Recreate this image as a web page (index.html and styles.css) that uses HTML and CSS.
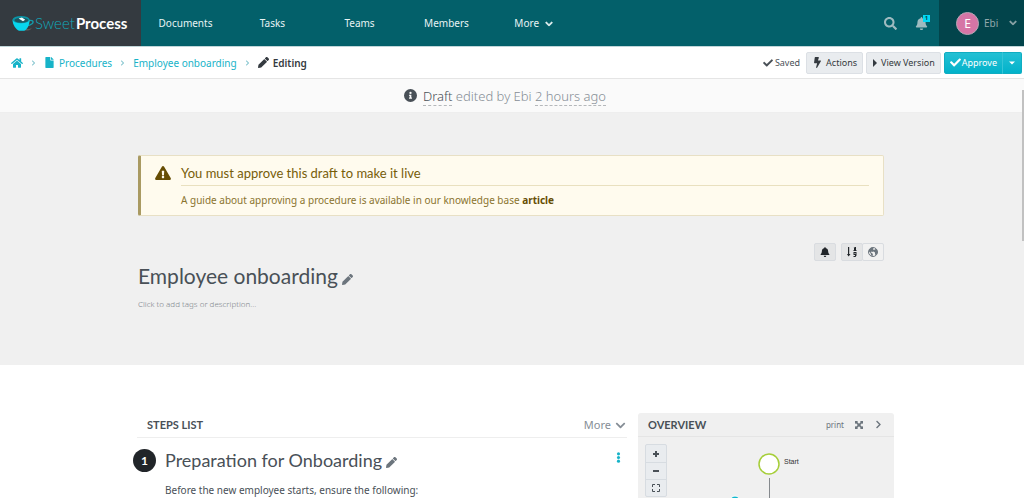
FILE: index.html
```html
<!DOCTYPE html>
<html lang="en">
<head>
<meta charset="utf-8">
<meta name="viewport" content="width=device-width, initial-scale=1">
<title>Employee onboarding - SweetProcess</title>
<link rel="stylesheet" href="styles.css">
</head>
<body>
<svg class="sprite" aria-hidden="true">
  <symbol id="i-pencil" viewBox="0 0 512 512"><path d="M498 142l-46 46c-5 5-13 5-17 0L324 77c-5-5-5-12 0-17l46-46c19-19 49-19 68 0l60 60c19 19 19 49 0 68zM284 100L22 362 0 484c-3 16 12 30 28 28l122-22 262-262c5-5 5-13 0-17L301 100c-4-5-12-5-17 0z"/></symbol>
  <symbol id="i-check" viewBox="0 0 512 512"><path d="M173.898 439.404l-166.4-166.4c-9.997-9.997-9.997-26.206 0-36.204l36.203-36.204c9.997-9.998 26.207-9.998 36.204 0L192 312.69 432.095 72.596c9.997-9.997 26.207-9.997 36.204 0l36.203 36.204c9.997 9.997 9.997 26.206 0 36.204l-294.4 294.401c-9.998 9.997-26.207 9.997-36.204-.001z"/></symbol>
  <symbol id="i-down" viewBox="0 0 448 512"><path d="M207 381.500L13 187c-9-9-9-24 0-34l22-22c10-10 25-10 34 0l155 154 155-154c9-10 24-10 34 0l22 22c9 10 9 25 0 34L241 381c-9 10-25 10-34 0z"/></symbol>
  <symbol id="i-right" viewBox="0 0 320 512"><path d="M285 273L91 467c-9 10-24 10-34 0l-22-22c-10-10-10-25 0-34l154-155L35 101c-10-9-10-24 0-34l22-22c10-10 25-10 34 0l194 194c10 9 10 25 0 34z"/></symbol>
  <symbol id="i-bell" viewBox="0 0 448 512"><path d="M224 512c35.320 0 63.970-28.650 63.970-64H160.030c0 35.350 28.650 64 63.970 64zm215.390-149.710c-19.320-20.760-55.470-51.990-55.470-154.290 0-77.700-54.480-139.900-127.940-155.160V32c0-17.670-14.320-32-31.980-32s-31.980 14.330-31.980 32v20.840C118.560 68.100 64.080 130.300 64.080 208c0 102.300-36.150 133.530-55.470 154.290-6 6.450-8.660 14.160-8.610 21.710.11 16.400 12.980 32 32.100 32h383.800c19.120 0 32-15.600 32.100-32 .05-7.550-2.610-15.270-8.610-21.710z"/></symbol>
</svg>

<header class="topbar">
  <a class="brand" href="#" aria-label="SweetProcess">
    <svg class="cup" viewBox="0 0 40 30" aria-hidden="true">
      <path d="M30 10c7-2 10 1 7 5-3 3-7 4-11 4" fill="none" stroke="#1599a8" stroke-width="2.500"/>
      <path d="M20 27c7 2 15 0 16-4-5 3-10 2-14 0z" fill="#5d5a58"/>
      <path d="M1 8c0 9 6 18 12 20h9c6-2 10-11 10-20z" fill="#08d5ed"/>
      <ellipse cx="16.500" cy="8" rx="15.500" ry="6.500" fill="#0a93a5"/>
      <ellipse cx="17" cy="9" rx="12.500" ry="4.500" fill="#1d5660"/>
      <path d="M12 6l6-2 6 4-4 3z" fill="#f2ffff"/>
    </svg>
    <span class="sweet">Sweet</span><span class="process">Process</span>
  </a>
  <nav class="mainnav" aria-label="Main">
    <a href="#">Documents</a><a href="#">Tasks</a><a href="#">Teams</a><a href="#">Members</a>
    <a href="#">More <svg class="icon s7 heavy"><use href="#i-down"/></svg></a>
  </nav>
  <div class="tools">
    <button class="plain" aria-label="Search"><svg class="icon s13" viewBox="0 0 512 512"><path d="M505 442.700L405.300 343c-4.500-4.500-10.600-7-17-7H372c27.600-35.300 44-79.700 44-128C416 93.100 322.900 0 208 0S0 93.100 0 208s93.100 208 208 208c48.300 0 92.700-16.400 128-44v16.300c0 6.400 2.500 12.500 7 17l99.700 99.700c9.400 9.400 24.600 9.400 33.900 0l28.300-28.300c9.400-9.400 9.400-24.600.1-34zM208 336c-70.700 0-128-57.200-128-128 0-70.700 57.200-128 128-128 70.700 0 128 57.200 128 128 0 70.700-57.200 128-128 128z"/></svg></button>
    <button class="plain alerts" aria-label="Notifications"><svg class="icon s13"><use href="#i-bell"/></svg><span class="badge">1</span></button>
  </div>
  <button class="plain user"><span class="avatar">E</span>Ebi<svg class="icon s7 heavy"><use href="#i-down"/></svg></button>
</header>

<div class="subbar">
  <nav class="crumbs" aria-label="Breadcrumb">
    <a href="#" aria-label="Home"><svg class="icon s12" viewBox="0 0 576 512"><path d="M280.370 148.260L96 300.110V464a16 16 0 0 0 16 16l112.060-.29a16 16 0 0 0 15.920-16V368a16 16 0 0 1 16-16h64a16 16 0 0 1 16 16v95.640a16 16 0 0 0 16 16.050L464 480a16 16 0 0 0 16-16V300L295.670 148.260a12.190 12.190 0 0 0-15.300 0zM571.600 251.470L488 182.560V44.050a12 12 0 0 0-12-12h-56a12 12 0 0 0-12 12v72.610L318.470 43a48 48 0 0 0-61 0L4.340 251.470a12 12 0 0 0-1.600 16.900l25.500 31A12 12 0 0 0 45.150 301l235.220-193.740a12.190 12.190 0 0 1 15.300 0L530.900 301a12 12 0 0 0 16.900-1.600l25.500-31a12 12 0 0 0-1.700-16.930z"/></svg></a>
    <svg class="icon sep"><use href="#i-right"/></svg>
    <a href="#"><svg class="icon s11" viewBox="0 0 384 512"><path d="M224 136V0H24C10.700 0 0 10.700 0 24v464c0 13.300 10.700 24 24 24h336c13.300 0 24-10.700 24-24V160H248c-13.200 0-24-10.800-24-24zm160-14.100v6.100H256V0h6.100c6.400 0 12.500 2.500 17 7l97.900 98c4.500 4.500 7 10.600 7 16.900z"/></svg>Procedures</a>
    <svg class="icon sep"><use href="#i-right"/></svg>
    <a href="#">Employee onboarding</a>
    <svg class="icon sep"><use href="#i-right"/></svg>
    <span class="current"><svg class="icon s11"><use href="#i-pencil"/></svg>Editing</span>
  </nav>
  <div class="actions">
    <span class="saved"><svg class="icon s9"><use href="#i-check"/></svg>Saved</span>
    <button class="btn"><svg class="icon s10" viewBox="0 0 320 512"><path d="M296 160H180.600l42.600-129.800C227.200 15 215.700 0 200 0H56C44 0 33.800 8.900 32.200 20.800l-32 240C-1.700 275.200 9.500 288 24 288h118.700L96.600 482.500c-3.600 15.200 8 29.500 23.300 29.500 8.400 0 16.400-4.400 20.800-12l176-304c9.300-15.900-2.200-36-20.700-36z"/></svg>Actions</button>
    <button class="btn view"><svg class="icon s6" viewBox="0 0 6 8"><path d="M1 0l4 4-4 4z"/></svg>View Version</button>
    <div class="split"><button class="approve"><svg class="icon s10"><use href="#i-check"/></svg>Approve</button><button class="approve toggle" aria-label="Approval options"><svg class="icon s6" viewBox="0 0 8 6"><path d="M0 1h8L4 5z"/></svg></button></div>
  </div>
</div>

<main class="scroller">
  <div class="draft">
    <svg class="icon s13" viewBox="0 0 496 496"><path fill-rule="evenodd" d="M248 0a248 248 0 1 0 0 496 248 248 0 0 0 0-496zm0 106a44 44 0 1 1 0 88 44 44 0 0 1 0-88zm56 258c0 7-5 12-12 12h-88c-7 0-12-5-12-12v-24c0-7 5-12 12-12h12v-64h-12c-7 0-12-5-12-12v-24c0-7 5-12 12-12h64c7 0 12 5 12 12v100h12c7 0 12 5 12 12z"/></svg>
    <span><a href="#" class="state">Draft</a> edited by Ebi <a href="#">2 hours ago</a></span>
  </div>

  <section class="hero">
    <div class="notice" role="alert">
      <svg class="icon s14" viewBox="0 0 576 512"><path d="M569.517 440.013C587.975 472.007 564.806 512 527.940 512H48.054c-36.937 0-59.999-40.055-41.577-71.987L246.423 23.985c18.467-32.009 64.720-31.951 83.154 0l239.940 416.028zM288 354c-25.405 0-46 20.595-46 46s20.595 46 46 46 46-20.595 46-46-20.595-46-46-46zm-43.673-165.346l7.418 136c.347 6.364 5.609 11.346 11.982 11.346h48.546c6.373 0 11.635-4.982 11.982-11.346l7.418-136c.375-6.874-5.098-12.654-11.982-12.654h-63.383c-6.884 0-12.356 5.780-11.981 12.654z"/></svg>
      <div class="notice-body">
        <h2>You must approve this draft to make it live</h2>
        <p>A guide about approving a procedure is available in our knowledge base <a href="#">article</a></p>
      </div>
    </div>
    <div class="toggles">
      <button class="mini on" aria-label="Notify"><svg class="icon s10"><use href="#i-bell"/></svg></button>
      <div class="pair">
        <button class="mini on" aria-label="Numbered steps"><svg class="icon s10" viewBox="0 0 10 10"><path d="M1 0h1.200v7h1.300L1.600 9.500 0 7h1zM6.500 1L8 0h1v3h.500v1h-3V3H7V1zM6.500 5h3v3.500L8.500 10h-2V9H8V8H6.500zm1 1v1h1V6z"/></svg></button>
        <button class="mini" aria-label="Public"><svg class="icon s10" viewBox="0 0 20 20"><circle cx="10" cy="10" r="9" fill="none" stroke="currentColor" stroke-width="2"/><path d="M2 5l5-4 4 1-1 3 3 1-3 4-3-1-1 2 3 2 1 3-2 3-2-3-1-4-3-3zM14 4l4 1 1 7-3 4-2-1v-4l-3-2z"/></svg></button>
      </div>
    </div>
    <h1 class="title">Employee onboarding<svg class="icon s11"><use href="#i-pencil"/></svg></h1>
    <p class="hint">Click to add tags or description...</p>
  </section>

  <div class="columns">
    <section class="steps">
      <header class="steps-head"><h2>STEPS LIST</h2><button class="plain">More <svg class="icon s10"><use href="#i-down"/></svg></button></header>
      <article class="step">
        <span class="num">1</span>
        <div class="step-body">
          <h3>Preparation for Onboarding<svg class="icon s11"><use href="#i-pencil"/></svg></h3>
          <p>Before the new employee starts, ensure the following:</p>
        </div>
        <button class="plain dots" aria-label="Step menu"><svg class="icon s11" viewBox="0 0 4 12"><circle cx="2" cy="2" r="1.700"/><circle cx="2" cy="6" r="1.700"/><circle cx="2" cy="10" r="1.700"/></svg></button>
      </article>
    </section>
    <aside class="overview">
      <header class="over-head"><h2>OVERVIEW</h2>
        <a href="#">print</a>
        <button class="plain" aria-label="Expand"><svg class="icon s7" viewBox="0 0 16 16"><path d="M0 0h6L4.500 2 8 5.500 11.500 2 10 0h6v6l-2-1.500L10.500 8l3.500 3.500 2-1.500v6h-6l1.500-2L8 10.500 4.500 14 6 16H0v-6l2 1.500L5.500 8 2 4.500 0 6z"/></svg></button>
        <button class="plain" aria-label="Collapse"><svg class="icon s8"><use href="#i-right"/></svg></button>
      </header>
      <div class="canvas">
        <div class="zoom">
          <button aria-label="Zoom in"><svg class="icon s7" viewBox="0 0 8 8"><path d="M3 1h2v2h2v2H5v2H3V5H1V3h2z"/></svg></button>
          <button aria-label="Zoom out"><svg class="icon s7" viewBox="0 0 8 8"><path d="M1 3h6v2H1z"/></svg></button>
          <button aria-label="Fit"><svg class="icon s7" viewBox="0 0 8 8"><path d="M.5 3V.5H3M5 .5h2.500V3M7.500 5v2.500H5M3 7.500H.5V5" fill="none" stroke="currentColor"/></svg></button>
        </div>
        <svg class="flow" viewBox="0 0 80 60" aria-hidden="true">
          <circle cx="39" cy="20" r="10" fill="#fff" stroke="#a6ce39" stroke-width="1.500"/>
          <path d="M39.500 34v26" stroke="#85898d" fill="none"/>
          <circle cx="5" cy="57" r="5" fill="#10b7cd" stroke="#fff"/>
        </svg>
        <span class="start">Start</span>
      </div>
    </aside>
  </div>
  <span class="thumb"></span>
</main>
</body>
</html>
```
FILE: styles.css
```css
* { box-sizing: border-box; }
html, body { height: 100%; }
body { margin: 0; display: flex; flex-direction: column; overflow: hidden; background: #fff; color: #495057; font: 10px/16px "Noto Sans", sans-serif; }
h1, h2, h3, p { margin: 0; font-weight: 400; }
a { color: inherit; text-decoration: none; }
button { font: inherit; color: inherit; cursor: pointer; }
.sprite { position: absolute; width: 0; height: 0; }
.icon { fill: currentColor; flex: none; width: 10px; height: 10px; }
.s6 { width: 6px; height: 8px; }
.s7 { width: 8px; height: 8px; }
.s8 { width: 9px; height: 9px; }
.s9 { width: 10px; height: 10px; }
.s10 { width: 11px; height: 11px; }
.s11 { width: 11px; height: 11px; }
.s12 { width: 12px; height: 12px; }
.s13 { width: 13px; height: 13px; }
.s14 { width: 16px; height: 14px; }
.heavy { stroke: currentColor; stroke-width: 40px; }
.plain { padding: 0; border: 0; background: none; display: flex; align-items: center; }

.topbar { flex: none; height: 46px; display: flex; align-items: stretch; background: #03606a; color: #e8f3f4; }
.brand { width: 141px; padding-left: 12px; display: flex; align-items: center; background: #343a40; font: 15px/20px Lato, sans-serif; }
.cup { width: 22px; height: 17px; margin-right: 1px; }
.sweet { margin-right: 1px; color: #10a9bb; font-weight: 300; }
.process { color: #fff; font-weight: 700; }
.mainnav { padding-left: 1px; display: flex; align-items: center; }
.mainnav a { width: 87px; text-align: center; white-space: nowrap; }
.mainnav .icon { margin-left: 3px; vertical-align: middle; }
.tools { margin-left: auto; display: flex; gap: 18px; padding-right: 11px; color: #9fbbc0; }
.alerts { position: relative; }
.badge { position: absolute; top: 15px; right: -2px; width: 7px; height: 7px; background: #00d8f5; color: #03464e; font-size: 6px; line-height: 7px; font-weight: 700; text-align: center; }
.user { width: 85px; padding: 0 7px 0 17px; background: #02444b; color: #91a8ab; }
.avatar { width: 23px; height: 23px; margin-right: 5px; border: 1px solid #b5a8b5; border-radius: 50%; background: #d675a6; color: #fff; font-size: 12px; line-height: 21px; text-align: center; }
.user .icon { margin-left: auto; }

.subbar { flex: none; height: 33px; padding: 0 2px 0 11px; border-top: 1px solid #c0d6d9; border-bottom: 1px solid #e5e5e5; display: flex; justify-content: space-between; align-items: center; background: #fff; box-shadow: 0 1px 2px #0001; position: relative; }
.crumbs { display: flex; align-items: center; gap: 8px; color: #17b3c8; }
.crumbs a, .current { display: flex; align-items: center; gap: 4px; }
.crumbs .sep { width: 5px; height: 6px; color: #80c3cd; }
.current { color: #343a40; font-weight: 600; }
.actions { display: flex; align-items: center; gap: 3px; font-size: 9px; }
.saved { display: flex; align-items: center; gap: 2px; margin-right: 3px; }
.btn, .approve { height: 22px; padding: 0 5px; display: flex; align-items: center; gap: 3px; border: 1px solid #dce0e5; border-radius: 2px; background: #e9ecef; color: #343a40; }
.split { display: flex; }
.approve { padding: 0 5px; gap: 1px; border-color: #10adc1; border-radius: 2px 0 0 2px; background: linear-gradient(#24c0d4, #02b2ca); color: #fff; }
.toggle { border-left-color: #35c5d7; margin-left: -1px; padding: 0 6px; border-radius: 0 2px 2px 0; }

.scroller { flex: 1; min-height: 0; overflow: hidden; position: relative; }
.thumb { position: absolute; top: 11px; right: 0; width: 2px; height: 151px; background: #c1c1c1; }
.draft { height: 34px; border-bottom: 1px solid #eee; display: flex; align-items: center; justify-content: center; gap: 6px; background: #fafafa; color: #868e96; font-size: 13px; line-height: 16px; font-weight: 300; padding-right: 14px; }
.draft .icon, .draft .state { color: #495057; }
.draft a { border-bottom: 1px dashed #b5b8bb; }
.hero { min-height: 252px; padding: 42px 140px 0 138px; background: #f0f0f0; }
.notice { display: flex; gap: 10px; padding: 9px 14px 7px 14px; border: 1px solid #e8e0c5; border-left: 3px solid #a99a62; border-radius: 2px; background: #fffbee; color: #775d09; }
.notice > .icon { margin-top: 1px; color: #664d03; }
.notice-body { flex: 1; }
.notice h2 { padding-bottom: 4px; border-bottom: 1px solid #e9e0bf; font: 13px/16px Lato, sans-serif; }
.notice p { padding-top: 6px; color: #8a742f; }
.notice a { font-weight: 700; color: #664d03; }
.toggles { display: flex; justify-content: flex-end; gap: 5px; margin-top: 27px; }
.pair { display: flex; }
.mini { width: 22px; height: 18px; padding: 0; display: flex; align-items: center; justify-content: center; border: 1px solid #d9dce0; border-radius: 2px; background: #f1f1f1; color: #6c757d; }
.mini.on { background: #e4e5e6; color: #212529; }
.mini .icon { width: 10px; height: 10px; }
.pair .mini + .mini { margin-left: -1px; }
.title { font: 21px/30px Lato, sans-serif; }
.title .icon, .step .icon { color: #6c757d; }
.title .icon, .step h3 .icon { margin-left: 4px; vertical-align: -1px; }
.hint { margin-top: 5px; font-size: 8px; line-height: 16px; font-weight: 300; color: #7d848a; }

.columns { display: grid; grid-template-columns: minmax(0, 1fr) 256px; gap: 11px; padding: 48px 130px 0 132px; }
.steps-head { margin-left: 5px; height: 25px; padding: 0 1px 0 10px; border-bottom: 1px solid #eee; display: flex; align-items: center; justify-content: space-between; color: #868e96; }
.steps-head h2, .over-head h2 { font: 700 11px/16px Lato, sans-serif; color: #495057; }
.steps-head .plain { gap: 4px; font-size: 11px; }
.step { display: flex; padding-top: 9px; }
.num { width: 23px; height: 23px; margin: 2px 9px 0 1px; border-radius: 50%; background: #212529; color: #fff; text-align: center; font: 700 12px/23px Lato, sans-serif; }
.step-body { flex: 1; }
.step h3 { font: 18px/26px Lato, sans-serif; }
.step p { margin-top: 9px; }
.step .dots { align-self: flex-start; margin: 5px 3px 0 0; }
.step .dots .icon { color: #17b3c8; }
.overview { height: 240px; background: #f0f0f0; border-radius: 3px 3px 0 0; }
.over-head { height: 24px; padding: 0 11px 0 10px; border-bottom: 1px solid #e5e5e5; display: flex; align-items: center; gap: 11px; color: #6c757d; font-size: 8px; }
.over-head h2 { margin-right: auto; }
.canvas { position: relative; padding: 7px; }
.zoom { width: 22px; border: 1px solid #d7dce1; border-radius: 2px; background: #e9ecef; }
.zoom button { width: 100%; height: 17px; padding: 0; border: 0; background: none; display: flex; justify-content: center; align-items: center; }
.zoom button + button { border-top: 1px solid #d7dce1; }
.flow { position: absolute; left: 92px; top: 7px; width: 80px; height: 60px; }
.start { position: absolute; left: 146px; top: 17px; font: 7px/16px "Liberation Sans", sans-serif; color: #333; }
```
